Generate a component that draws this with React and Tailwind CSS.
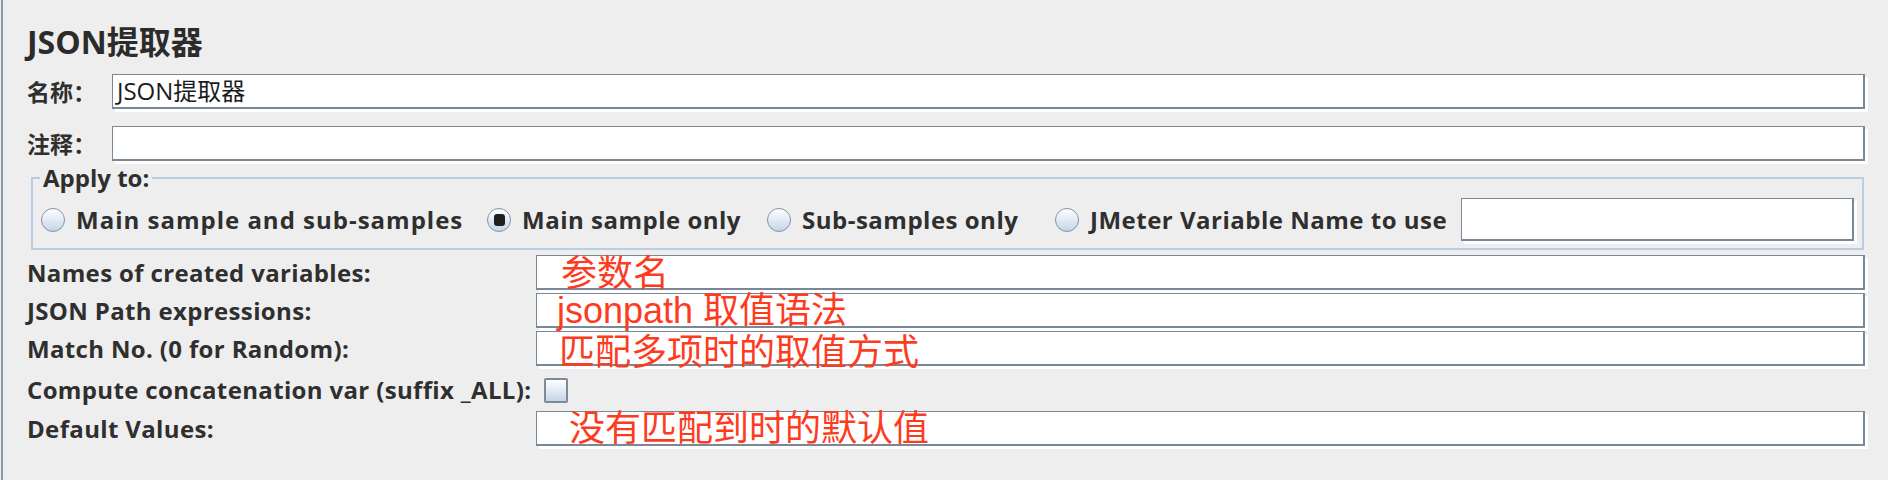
const LBL =
  "font-['Open_Sans','Noto_Sans_CJK_SC',sans-serif] text-[24px] font-bold text-[#2f2f2f] leading-none whitespace-nowrap";
const RED =
  "font-['Liberation_Sans','Noto_Sans_CJK_SC',sans-serif] text-[36px] leading-none text-[#fd3b1f] whitespace-nowrap";

function Field({ className = "", children }) {
  return (
    <div
      className={`flex items-center overflow-visible border-t border-l border-r-2 border-b-2 border-[#7a8796] bg-white shadow-[3px_3px_0_0_#ffffff] ${className}`}
    >
      {children}
    </div>
  );
}

function Radio({ checked = false }) {
  return (
    <span className="flex h-[24px] w-[24px] shrink-0 items-center justify-center rounded-full border border-[#8492a1] bg-linear-to-b from-white to-[#c4d5ea] shadow-[inset_0_1px_1px_rgba(255,255,255,0.9)]">
      {checked && <span className="h-[12px] w-[11px] rounded-[3px] bg-[#1e1e1e]" />}
    </span>
  );
}

function RadioItem({ checked, label, w, gap, track = "tracking-[0.5px]" }) {
  return (
    <div className={`flex shrink-0 items-center ${gap}`}>
      <Radio checked={checked} />
      <span className={`ml-[11px] ${w} ${LBL} ${track}`}>{label}</span>
    </div>
  );
}

function Row({ label, children, className = "" }) {
  return (
    <div className={`flex h-[35px] items-center ${className}`}>
      <div className={`w-[509px] shrink-0 ${LBL} tracking-[0.35px]`}>{label}</div>
      <Field className="h-full flex-1">{children}</Field>
    </div>
  );
}

export default function App() {
  return (
    <div className="h-[480px] w-[1888px] overflow-hidden bg-[#eeeeee]">
      <div className="ml-px h-full border-l-2 border-[#8e9aa6] pl-[24px] pr-[23px]">
        {/* Title */}
        <div className="flex h-[62px] items-center pt-[22px] font-['Open_Sans','Noto_Sans_CJK_SC',sans-serif] text-[32px] font-bold leading-none text-[#2b2b2b]">
          JSON提取器
        </div>

        {/* Name */}
        <div className="mt-[12px] flex h-[35px] items-center">
          <div className="w-[85px] shrink-0 font-['Noto_Sans_CJK_SC',sans-serif] text-[23px] font-bold leading-none text-[#2f2f2f]">
            名称：
          </div>
          <Field className="h-full flex-1 pl-[4px]">
            <span className="font-['Open_Sans','Noto_Sans_CJK_SC',sans-serif] text-[24px] leading-none text-[#1c1c1c]">
              JSON提取器
            </span>
          </Field>
        </div>

        {/* Comment */}
        <div className="mt-[17px] flex h-[35px] items-center">
          <div className="w-[85px] shrink-0 font-['Noto_Sans_CJK_SC',sans-serif] text-[23px] font-bold leading-none text-[#2f2f2f]">
            注释：
          </div>
          <Field className="h-full flex-1" />
        </div>

        {/* Apply to */}
        <fieldset className="mt-[5px] ml-[4px] mr-[1px] border-2 border-[#b9cde5]">
          <legend className={`ml-[7px] px-[3px] leading-[32px] ${LBL}`}>Apply to:</legend>
          <div className="mt-[8px] mb-[7px] flex h-[43px] items-center pl-[8px] pr-[8px]">
            <RadioItem label="Main sample and sub-samples" w="w-[384px]" gap="mr-[27px]" track="tracking-[1px]" />
            <RadioItem checked label="Main sample only" w="w-[218px]" gap="mr-[27px]" />
            <RadioItem label="Sub-samples only" w="w-[228px]" gap="mr-[25px]" />
            <RadioItem label="JMeter Variable Name to use" w="w-[351px]" gap="mr-[20px]" />
            <Field className="h-full flex-1" />
          </div>
        </fieldset>

        {/* Extractor fields */}
        <div className="mt-[5px] flex flex-col">
          <Row label="Names of created variables:">
            <span className={`ml-[24px] translate-y-[2px] ${RED}`}>参数名</span>
          </Row>
          <Row label="JSON Path expressions:" className="mt-[3px]">
            <span className={`ml-[20px] translate-y-[1px] ${RED}`}>jsonpath 取值语法</span>
          </Row>
          <Row label="Match No. (0 for Random):" className="mt-[3px]">
            <span className={`ml-[22px] translate-y-[5px] ${RED}`}>匹配多项时的取值方式</span>
          </Row>
          <div className="mt-[3px] flex h-[42px] items-center">
            <div className={`w-[509px] shrink-0 ${LBL} tracking-[0.35px]`}>
              Compute concatenation var (suffix _ALL):
            </div>
            <span className="ml-[8px] h-[25px] w-[24px] rounded-[2px] border-2 border-[#7d8a97] bg-linear-to-b from-white to-[#c5d5e8]" />
          </div>
          <Row label="Default Values:">
            <span className={`ml-[32px] translate-y-[1px] ${RED}`}>没有匹配到时的默认值</span>
          </Row>
        </div>
      </div>
    </div>
  );
}
